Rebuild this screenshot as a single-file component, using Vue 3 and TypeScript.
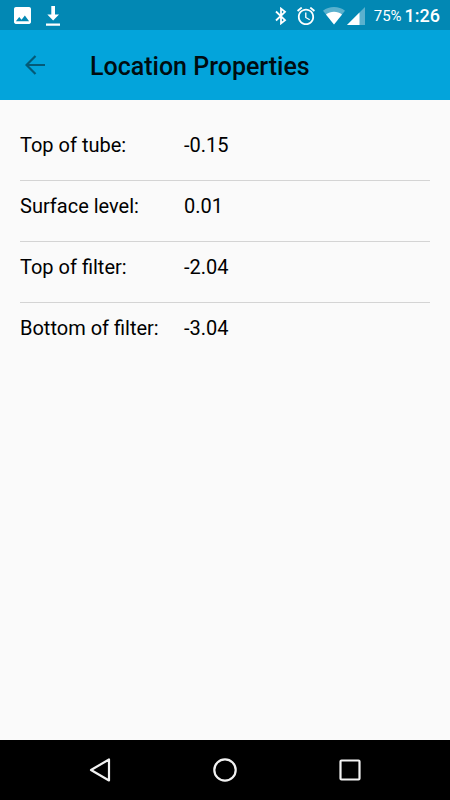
<script setup lang="ts">
interface Property {
  label: string
  value: string
}

const properties: Property[] = [
  { label: 'Top of tube:', value: '-0.15' },
  { label: 'Surface level:', value: '0.01' },
  { label: 'Top of filter:', value: '-2.04' },
  { label: 'Bottom of filter:', value: '-3.04' },
]
</script>

<template>
  <div class="screen">
    <div class="status-bar">
      <div class="notifications">
        <svg width="17" height="17" viewBox="3 3 18 18" aria-hidden="true">
          <path fill="currentColor" d="M21 19V5c0-1.100-.9-2-2-2H5c-1.100 0-2 .9-2 2v14c0 1.100.9 2 2 2h14c1.100 0 2-.9 2-2zM8.500 13.500l2.500 3 3.500-4.500 4.500 6H5l3.500-4.500z" />
        </svg>
        <svg width="14" height="20" viewBox="0 0 14 20" aria-hidden="true">
          <path fill="currentColor" d="M5.300 0h3.700v8.500h4L7.150 14.500 1.300 8.500h4zM0 17.500h14v2.200H0z" />
        </svg>
      </div>
      <div class="indicators">
        <svg class="bluetooth" width="12" height="18" viewBox="0 0 12 18" aria-hidden="true">
          <path fill="none" stroke="currentColor" stroke-width="1.800" d="M1 4.500 10 13.200 6 16.400V1.600L10 4.800 1 13.500" />
        </svg>
        <svg class="alarm" width="18" height="18" viewBox="2 2 20 20" aria-hidden="true">
          <path fill="currentColor" d="M22 5.720l-4.600-3.860-1.290 1.530 4.600 3.860L22 5.720zM7.880 3.390L6.600 1.860 2 5.710l1.290 1.530 4.590-3.850zM12.500 8H11v6l4.750 2.850.75-1.230-4-2.370V8zM12 4c-4.970 0-9 4.030-9 9s4.020 9 9 9c4.970 0 9-4.030 9-9s-4.030-9-9-9zm0 16c-3.870 0-7-3.130-7-7s3.130-7 7-7 7 3.130 7 7-3.130 7-7 7z" />
        </svg>
        <svg class="wifi" width="22" height="18" viewBox="0 0 22 18" aria-hidden="true">
          <path fill="currentColor" fill-opacity=".35" d="M11 17.500 0 3.700C3 1.300 7 0 11 0s8 1.300 11 3.700z" />
          <path fill="currentColor" d="M11 17.500 3 7.400C5.300 5.600 8 4.700 11 4.700s5.700.9 8 2.700z" />
        </svg>
        <svg class="signal" width="18" height="18" viewBox="0 0 18 18" aria-hidden="true">
          <path fill="currentColor" fill-opacity=".35" d="M0 18 18 0v18z" />
          <path fill="currentColor" d="M0 18 12.500 5.500V18z" />
        </svg>
        <span class="battery">75%</span>
        <time class="clock">1:26</time>
      </div>
    </div>

    <header class="app-bar">
      <button class="back" type="button" aria-label="Back">
        <svg width="20" height="20" viewBox="0 0 20 20" aria-hidden="true">
          <path fill="none" stroke="currentColor" stroke-width="2.200" d="M20 10H2M10.500 1 1.500 10l9 9" />
        </svg>
      </button>
      <h1>Location Properties</h1>
    </header>

    <main>
      <dl>
        <div v-for="property in properties" :key="property.label" class="row">
          <dt>{{ property.label }}</dt>
          <dd>{{ property.value }}</dd>
        </div>
      </dl>
    </main>

    <nav class="nav-bar">
      <button type="button" aria-label="Navigate back">
        <svg width="26" height="26" viewBox="0 0 26 26" aria-hidden="true">
          <path d="M22 2.500v21L4 13z" />
        </svg>
      </button>
      <button type="button" aria-label="Home">
        <svg width="26" height="26" viewBox="0 0 26 26" aria-hidden="true">
          <circle cx="13" cy="13" r="10.700" />
        </svg>
      </button>
      <button type="button" aria-label="Recent apps">
        <svg width="26" height="26" viewBox="0 0 26 26" aria-hidden="true">
          <rect x="3.500" y="3.500" width="19" height="19" rx="1" />
        </svg>
      </button>
    </nav>
  </div>
</template>

<style>
body {
  margin: 0;
}
</style>

<style scoped>
.screen {
  display: flex;
  flex-direction: column;
  min-height: 100vh;
  background: #fafafa;
  color: #000;
  font-family: Roboto, sans-serif;
}

.status-bar {
  display: flex;
  justify-content: space-between;
  box-sizing: border-box;
  height: 30px;
  padding: 1px 10px 0 14px;
  background: #0288b4;
  color: #fff;
}

.notifications,
.indicators {
  display: flex;
  align-items: center;
}

.notifications {
  gap: 15px;
}

.alarm {
  margin-left: 10px;
}

.wifi {
  margin-left: 8px;
}

.signal {
  margin-left: 2px;
}

.battery {
  margin-left: 9px;
  font-size: 15px;
}

.clock {
  margin-left: 3px;
  font-size: 18px;
  font-weight: 500;
}

.app-bar {
  display: flex;
  align-items: center;
  gap: 40px;
  height: 70px;
  padding: 0 20px;
  background: #03a4db;
}

button {
  display: flex;
  align-items: center;
  justify-content: center;
  padding: 0;
  border: 0;
  background: none;
}

.back {
  width: 30px;
  height: 40px;
  color: #045a78;
}

h1 {
  margin: 0;
  padding-top: 3px;
  color: #000c10;
  font-size: 25px;
  font-weight: 500;
  line-height: 32px;
}

main {
  flex: 1;
  padding: 20px;
}

dl {
  margin: 0;
}

.row {
  display: grid;
  grid-template-columns: 2fr 3fr;
  padding: 13px 0 23px;
  border-bottom: 1px solid #d4d4d4;
  font-size: 20px;
  line-height: 24px;
}

.row:last-child {
  border-bottom: 0;
}

dd {
  margin: 0;
}

.nav-bar {
  display: flex;
  justify-content: center;
  gap: 77px;
  height: 60px;
  background: #000;
}

.nav-bar button {
  width: 48px;
}

.nav-bar svg {
  fill: none;
  stroke: #f2f2f2;
  stroke-width: 2.200;
  stroke-linejoin: round;
}
</style>
